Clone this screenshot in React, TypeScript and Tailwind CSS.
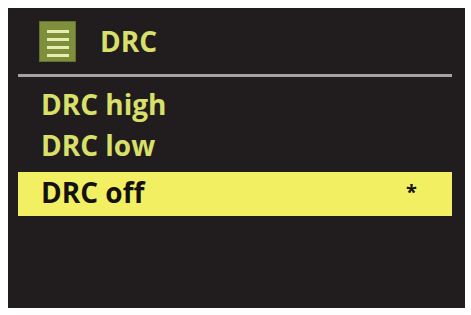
import React from 'react';

const MenuIcon: React.FC = () => (
  <div className="w-[37px] h-[41px] bg-[#7f903c] border border-[#62712c] flex flex-col items-center pt-[8px] gap-[5px]">
    <div className="w-[22px] h-[3px] bg-[#e8ecac]" />
    <div className="w-[22px] h-[3px] bg-[#e8ecac]" />
    <div className="w-[22px] h-[3px] bg-[#e8ecac]" />
    <div className="w-[22px] h-[3px] bg-[#e8ecac]" />
  </div>
);

const items = [
  { label: 'DRC high', selected: false },
  { label: 'DRC low', selected: false },
  { label: 'DRC off', selected: true },
];

export default function App() {
  return (
    <div className="w-[471px] h-[315px] bg-white p-[8px] pr-[6px]" style={{ fontFamily: '"Open Sans", "DejaVu Sans", sans-serif' }}>
      <div className="w-[457px] h-[300px] bg-[#211d1f] pl-[10px] pr-[13px]">
        <div className="h-[66px] flex items-center pl-[21px] gap-[24px]">
          <MenuIcon />
          <span className="text-[28px] leading-[38px] font-bold text-[#d9e06a]">DRC</span>
        </div>
        <div className="h-[3px] bg-[#a3a3a3]" />
        <div className="pt-[6px] flex flex-col">
          {items.map((item) =>
            item.selected ? (
              <div
                key={item.label}
                className="mt-[7px] h-[44px] bg-[#f2f062] flex items-center justify-between pl-[23px] pr-[35px] pb-[4px]"
              >
                <span className="text-[28px] leading-[38px] font-bold text-[#141210]">{item.label}</span>
                <span className="text-[20px] leading-[38px] font-bold text-[#141210]">*</span>
              </div>
            ) : (
              <div key={item.label} className="h-[41px] pl-[23px] flex items-center">
                <span className="text-[28px] leading-[42px] font-bold text-[#d9e06a]">{item.label}</span>
              </div>
            )
          )}
        </div>
      </div>
    </div>
  );
}
